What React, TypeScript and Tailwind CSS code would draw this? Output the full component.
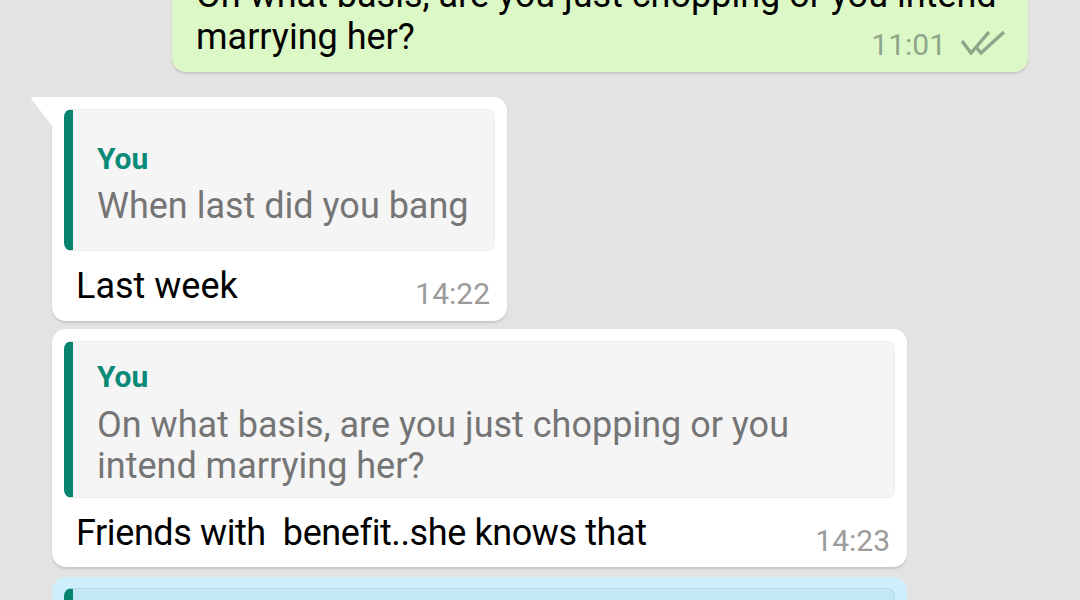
const font = { fontFamily: 'Roboto, "Noto Sans", Arial, sans-serif' };

function Ticks() {
  return (
    <svg width="46" height="24" viewBox="0 0 46 24" fill="none" className="mb-[3px]">
      <path d="M2 10 L11 22 L29 1" stroke="#8fa68a" strokeWidth="3.4" />
      <path d="M16 16 L21 22 L44 1" stroke="#8fa68a" strokeWidth="3.4" />
    </svg>
  );
}

function Quote({ text, className, gap }: { text: string; className: string; gap: string }) {
  return (
    <div
      className={`rounded-[8px] border border-[#ececec] border-l-[9px] border-l-[#07836f] bg-[#f5f5f5] pl-[24px] pr-[24px] ${className}`}
    >
      <div className="text-[30px] font-bold leading-[36px] text-[#0a8a77]">You</div>
      <div className={`${gap} text-[36px] leading-[41px] text-[#757575]`}>{text}</div>
    </div>
  );
}

function Time({ children }: { children: string }) {
  return <span className="shrink-0 text-[30px] leading-[26px] text-[#9b9b9b]">{children}</span>;
}

export default function App() {
  return (
    <div className="h-[600px] w-[1080px] overflow-hidden bg-[#e3e3e3]" style={font}>
      <div className="-mt-[38px] flex flex-col pl-[52px]">
        {/* outgoing */}
        <div className="ml-[120px] w-[856px] rounded-[14px] bg-[#dcf8c6] pb-[14px] pl-[24px] pr-[22px] pt-[12px] shadow-[0_2px_2px_rgba(0,0,0,0.12)]">
          <div className="text-[36px] leading-[42px] text-black">
            On what basis, are you just chopping or you intend
          </div>
          <div className="flex items-end justify-between">
            <span className="text-[36px] leading-[42px] text-black">marrying her?</span>
            <div className="flex items-end gap-[14px]">
              <span className="text-[30px] leading-[26px] text-[#8fa68a]">11:01</span>
              <Ticks />
            </div>
          </div>
        </div>

        {/* reply 1 */}
        <div className="relative mt-[25px] w-[455px] rounded-[14px] rounded-tl-none bg-white px-[12px] pb-[14px] pt-[12px] shadow-[0_2px_2px_rgba(0,0,0,0.12)]">
          <svg
            className="absolute -left-[22px] top-0"
            width="23"
            height="30"
            viewBox="0 0 23 30"
          >
            <path d="M3 0 Q0 0 2 3 L23 30 L23 0 Z" fill="#ffffff" />
          </svg>
          <Quote text="When last did you bang" gap="mt-[9px]" className="pb-[23px] pt-[31px]" />
          <div className="mt-[14px] flex items-end justify-between pl-[12px] pr-[5px]">
            <span className="text-[36px] leading-[42px] text-black">Last week</span>
            <Time>14:22</Time>
          </div>
        </div>

        {/* reply 2 */}
        <div className="mt-[8px] w-[855px] rounded-[14px] bg-white px-[12px] pb-[13px] pt-[12px] shadow-[0_2px_2px_rgba(0,0,0,0.12)]">
          <Quote
            text="On what basis, are you just chopping or you intend marrying her?"
            gap="mt-[10px]"
            className="pb-[10px] pt-[17px]"
          />
          <div className="mt-[14px] flex items-end justify-between pl-[12px] pr-[5px]">
            <span className="whitespace-pre text-[36px] leading-[42px] tracking-[-0.4px] text-black">
              {'Friends with  benefit..she knows that'}
            </span>
            <Time>14:23</Time>
          </div>
        </div>

        {/* highlighted, cut off */}
        <div className="mt-[10px] w-[855px] rounded-[14px] bg-[#cfeefc] px-[12px] pt-[11px] pb-[12px]">
          <div className="h-[120px] rounded-[8px] border border-[#addaee] border-l-[9px] border-l-[#07836f] bg-[#c4e7f6]" />
        </div>
      </div>
    </div>
  );
}
